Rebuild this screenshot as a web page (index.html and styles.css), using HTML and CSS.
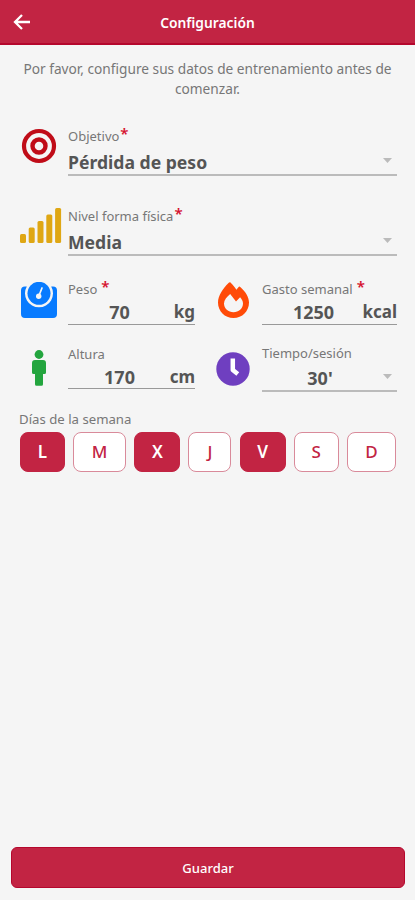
FILE: index.html
```
<!doctype html>
<html lang="es">
<head>
<meta charset="utf-8">
<title>Configuración</title>
<link rel="stylesheet" href="styles.css">
</head>
<body>
<div class="app">
  <header class="topbar">
    <svg class="back" viewBox="0 0 18 18"><path d="M17 9H3M9 2L2 9l7 7"/></svg>
    <h1>Configuración</h1>
  </header>

  <p class="intro">Por favor, configure sus datos de entrenamiento antes de<br>comenzar.</p>

  <!-- Objetivo y nivel -->
  <div class="row row-goal">
    <div class="icon">
      <svg class="i-target" width="36" height="36" viewBox="0 0 36 36"><g fill="none" stroke="#c00c18"><circle cx="18" cy="18" r="15" stroke-width="4.200"/><circle cx="18" cy="18" r="6.500" stroke-width="4.400"/></g></svg>
    </div>
    <div class="field">
      <label>Objetivo<b>*</b></label>
      <div class="value wide"><span>Pérdida de peso</span><i class="caret"></i></div>
    </div>
  </div>

  <div class="row row-level">
    <div class="icon">
      <svg class="i-bars" width="42" height="36" viewBox="0 0 42 36"><g fill="#dfa714"><rect x="0" y="27" width="6" height="9" rx="1.500"/><rect x="8.700" y="20.500" width="6" height="15.500" rx="1.500"/><rect x="17.500" y="14" width="6" height="22" rx="1.500"/><rect x="26.300" y="7.500" width="6" height="28.500" rx="1.500"/><rect x="35.100" y="1" width="6" height="35" rx="1.500"/></g></svg>
    </div>
    <div class="field">
      <label>Nivel forma física<b>*</b></label>
      <div class="value wide"><span>Media</span><i class="caret"></i></div>
    </div>
  </div>

  <!-- Datos numéricos -->
  <div class="row row-weight">
    <div class="icon">
      <svg class="i-scale" width="36" height="36" viewBox="0 0 36 36"><path fill="#087bff" d="M4 4.500h1.800a14 14 0 1 0 24.400 0H32a4 4 0 0 1 4 4V32a4 4 0 0 1-4 4H4a4 4 0 0 1-4-4V8.500a4 4 0 0 1 4-4z"/><circle cx="18" cy="11.300" r="11.500" fill="#087bff"/><path d="M18 13.500l3-7.500" stroke="#f5f5f5" stroke-width="1.700" stroke-linecap="round"/><circle cx="17.700" cy="14.200" r="2.700" fill="#f5f5f5"/></svg>
    </div>
    <div class="field">
      <label>Peso<b class="apart">*</b></label>
      <div class="value thin"><span class="num">70</span><span class="unit">kg</span></div>
    </div>
    <div class="icon">
      <svg class="i-fire" width="32" height="36" viewBox="0 0 32 36"><path fill="#ff4b08" fill-rule="evenodd" d="M10.800.800c.6-.7 1.300-.7 1.900-.1 2 1.900 4 4.300 5.700 7l2-2.500c.7-.8 1.400-.8 2.100 0C27.500 9.500 31 15 31 20.500 31 29.200 24.300 36 15.500 36S0 29.200 0 20.500C0 14 4.500 7 10.800.800zM6 21.500c0 5 4.300 8.700 9.500 8.700s9.500-3.700 9.500-8.700c0-2.200-1.200-4-2.900-6.200L18 19.500l-5.800-7.500C8.800 15 6 18 6 21.500z"/></svg>
    </div>
    <div class="field">
      <label>Gasto semanal<b class="apart">*</b></label>
      <div class="value thin"><span class="num">1250</span><span class="unit">kcal</span></div>
    </div>
  </div>

  <div class="row row-height">
    <div class="icon">
      <svg class="i-person" width="14" height="36" viewBox="0 0 14 36"><g fill="#23a53e"><circle cx="7" cy="4.500" r="4.400"/><path d="M3 10h8a3 3 0 0 1 3 3v9.500a1.500 1.500 0 0 1-1.500 1.500H11v10.300a1.500 1.500 0 0 1-1.500 1.500h-5A1.500 1.500 0 0 1 3 34.300V24H1.500A1.500 1.500 0 0 1 0 22.500V13a3 3 0 0 1 3-3z"/></g></svg>
    </div>
    <div class="field">
      <label>Altura</label>
      <div class="value thin"><span class="num">170</span><span class="unit">cm</span></div>
    </div>
    <div class="icon">
      <svg class="i-clock" width="34" height="34" viewBox="0 0 34 34"><circle cx="17" cy="17" r="16.700" fill="#6f3fc0"/><path d="M16.800 6.500V18l5 4" fill="none" stroke="#fff" stroke-width="4.500" stroke-linejoin="round"/></svg>
    </div>
    <div class="field time">
      <label>Tiempo/sesión</label>
      <div class="value"><span class="num">30'</span><i class="caret"></i></div>
    </div>
  </div>

  <!-- Días de la semana -->
  <div class="days-title">Días de la semana</div>
  <div class="days">
    <button class="day on">L</button>
    <button class="day">M</button>
    <button class="day on">X</button>
    <button class="day">J</button>
    <button class="day on">V</button>
    <button class="day">S</button>
    <button class="day">D</button>
  </div>

  <button class="save">Guardar</button>
</div>
</body>
</html>
```
FILE: styles.css
```
*{
	box-sizing:border-box;
	margin:0;
	padding:0;
}
body{
	background:#f5f5f5;
	color:#777;
	font-family:"Noto Sans","Open Sans",sans-serif;
	font-size:13px;
}
.app{
	display:flex;
	flex-direction:column;
	height:900px;
}

/* cabecera */
.topbar{
	display:grid;
	grid-template-columns:44px 1fr 44px;
	align-items:center;
	height:45px;
	padding-top:1px;
	background:#c22443;
	border-bottom:2px solid #b5072d;
	color:#fff;
}
.back{
	width:18px;
	height:18px;
	margin-left:13px;
	fill:none;
	stroke:#fff;
	stroke-width:2.3;
}
.topbar h1{
	text-align:center;
	font-size:13.8px;
	font-weight:600;
	line-height:20px;
	padding-top:2px;
}
.intro{
	padding-top:14px;
	text-align:center;
	font-size:13.7px;
	line-height:20px;
	white-space:nowrap;
}

/* filas del formulario */
.row{
	display:grid;
	grid-template-columns:48px 329px;
	padding-left:20px;
}
.row-goal{
	height:80px;
	margin-top:27px;
}
.row-level{
	height:73px;
}
.row-weight,
.row-height{
	grid-template-columns:48px 127px 67px 135px;
	height:65px;
}
.icon svg{
	display:block;
}
.i-target{ margin:2px 0 0 1px; }
.i-bars{ margin:1px 0 0 0; }
.i-scale{ margin:3px 0 0 1px; }
.i-fire{ margin:3px 0 0 23px; }
.i-person{ margin:6px 0 0 12px; }
.i-clock{ margin:8px 0 0 21px; }

.field label{
	display:flex;
	height:20px;
	line-height:20px;
}
.field label b{
	margin-left:1px;
	margin-top:-3px;
	color:#d5122f;
	font-size:15px;
	font-weight:600;
	line-height:20px;
}
.field label b.apart{
	margin-left:4px;
}
.value{
	display:flex;
	align-items:center;
	justify-content:space-between;
	height:30px;
	border-bottom:2px solid #bbb;
	color:#555;
	font-size:17.6px;
	font-weight:700;
	line-height:24px;
}
.value.wide{
	padding-top:3px;
}
.value.thin{
	height:26px;
	padding-top:1px;
	border-bottom:1px solid #999;
}
.row-height .value.thin{
	height:25px;
}
.row-height label{
	margin-top:-1px;
	padding-top:1px;
	height:21px;
}
.row-height .time label{
	padding-top:0;
}
.row-height .time .value{
	height:28px;
	padding-top:1px;
}
.num{
	flex:none;
	width:101px;
	padding-left:2px;
	text-align:center;
	font-size:18px;
}
.time .num{
	width:116px;
	padding-left:0;
}
.unit{
	margin-left:-1px;
	font-size:17px;
}
.caret{
	width:9px;
	height:5px;
	margin-right:5px;
	margin-top:-2px;
	background:#bbb;
	clip-path:polygon(0 0,100% 0,50% 100%);
}

/* selector de días */
.days-title{
	padding-left:19px;
	font-size:13.2px;
	line-height:20px;
}
.days{
	display:grid;
	grid-template-columns:45px 53px 46px 43px 46px 45px 49px;
	justify-content:space-between;
	width:376px;
	height:40px;
	margin:3px 0 0 20px;
}
.day{
	padding-bottom:1px;
	border:1px solid #d98a9a;
	border-radius:8px;
	background:#fff;
	color:#c22443;
	font:500 17px "Noto Sans","Open Sans",sans-serif;
}
.day.on{
	border-color:#c22443;
	background:#c22443;
	color:#fff;
	font-weight:600;
}

.save{
	height:41px;
	margin:auto 10px 12px 11px;
	border:1px solid #b5072d;
	border-radius:6px;
	background:#c22443;
	color:#fff;
	font:500 13px "Noto Sans","Open Sans",sans-serif;
}
```
